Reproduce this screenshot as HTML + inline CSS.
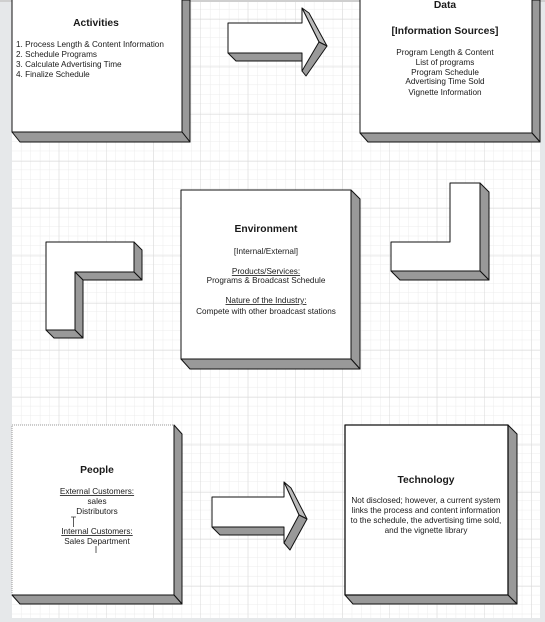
<!DOCTYPE html>
<html><head><style>
html,body{margin:0;padding:0;background:#fff;}
svg{display:block;}
text{font-family:"Liberation Sans",Arial,sans-serif;fill:#1a1a1a;}
.t{font-weight:bold;font-size:10.3px;}
.s{font-size:8.2px;}
</style></head><body>
<svg width="545" height="622" viewBox="0 0 545 622" xmlns="http://www.w3.org/2000/svg">
<defs>
<pattern id="minor" x="12" y="0" width="9.45" height="9.45" patternUnits="userSpaceOnUse">
<path d="M9.45 0V9.45H0" fill="none" stroke="#ececec" stroke-width="1"/>
</pattern>
<pattern id="major" x="12" y="20" width="47.25" height="47.25" patternUnits="userSpaceOnUse">
<path d="M47.25 0V47.25H0" fill="none" stroke="#d8d8d8" stroke-width="1"/>
</pattern>
</defs>
<rect width="545" height="622" fill="#fff"/>
<rect x="12" y="0" width="528" height="618" fill="url(#minor)"/>
<rect x="12" y="0" width="528" height="618" fill="url(#major)"/>
<rect x="0" y="0" width="12" height="622" fill="#e6e8ea"/>
<rect x="540" y="0" width="5" height="622" fill="#e6e8ea"/>
<rect x="0" y="618" width="545" height="4" fill="#e6e8ea"/>
<rect x="0" y="0" width="545" height="2" fill="#cfcfcf"/>

<g stroke="#111" stroke-width="1" stroke-linejoin="round">
<polygon points="182,0 190,0 190,142 182,132" fill="#999"/>
<polygon points="12,132 182,132 190,142 20,142" fill="#999"/>
<rect x="12" y="-2" width="170" height="134" fill="#fff"/>
<polygon points="532,0 540,0 540,142 532,133" fill="#999"/>
<polygon points="360,133 532,133 540,142 368,142" fill="#999"/>
<rect x="360" y="-2" width="172" height="135" fill="#fff"/>
<polygon points="351,190 360,199 360,369 351,359" fill="#999"/>
<polygon points="181,359 351,359 360,369 190,369" fill="#999"/>
<rect x="181" y="190" width="170" height="169" fill="#fff"/>
<polygon points="174,425 182,434 182,604 174,595" fill="#999"/>
<polygon points="12,595 174,595 182,604 20,604" fill="#999"/>
<rect x="12" y="425" width="162" height="170" fill="#fff" stroke="#999" stroke-dasharray="1,1"/>
<line x1="174" y1="425" x2="174" y2="595"/>
<line x1="12" y1="595" x2="174" y2="595"/>
<polygon points="508,425 517,434 517,604 508,595" fill="#999"/>
<polygon points="345,595 508,595 517,604 353,604" fill="#999"/>
<rect x="345" y="425" width="163" height="170" fill="#fff" stroke-width="1.3"/>

<polygon points="228,53 236,61 302,61 302,53" fill="#999"/>
<polygon points="302,8 309,13 327,46 319,42" fill="#bbb"/>
<polygon points="319,42 327,46 306,76 302,71 302,62" fill="#999"/>
<polygon points="228,23 302,23 302,8 319,42 302,71 302,53 228,53" fill="#fff"/>
<polygon points="212,527 220,535 284,535 284,527" fill="#999"/>
<polygon points="284,482 291,488 307,519 299,515" fill="#bbb"/>
<polygon points="299,515 307,519 290,550 284,543 284,535" fill="#999"/>
<polygon points="212,497 284,497 284,482 299,515 284,543 284,527 212,527" fill="#fff"/>

<polygon points="134,242 142,250 142,280 134,272" fill="#999"/>
<polygon points="75,272 134,272 142,280 83,280" fill="#999"/>
<polygon points="75,272 83,280 83,338 75,330" fill="#999"/>
<polygon points="46,330 75,330 83,338 54,338" fill="#999"/>
<polygon points="46,242 134,242 134,272 75,272 75,330 46,330" fill="#fff"/>
<polygon points="480,183 489,192 489,280 480,271" fill="#999"/>
<polygon points="391,271 480,271 489,280 400,280" fill="#999"/>
<polygon points="450,183 480,183 480,271 391,271 391,242 450,242" fill="#fff"/>
</g>

<text class="t" x="96" y="26" text-anchor="middle">Activities</text>
<text class="s" x="16" y="47">1.  Process Length &amp; Content Information</text>
<text class="s" x="16" y="57">2.  Schedule Programs</text>
<text class="s" x="16" y="67">3. Calculate Advertising Time</text>
<text class="s" x="16" y="77">4. Finalize Schedule</text>

<text class="t" x="445" y="8" text-anchor="middle">Data</text>
<text class="t" x="445" y="34" text-anchor="middle">[Information Sources]</text>
<text class="s" x="445" y="55" text-anchor="middle">Program Length &amp; Content</text>
<text class="s" x="445" y="65" text-anchor="middle">List of programs</text>
<text class="s" x="445" y="75" text-anchor="middle">Program Schedule</text>
<text class="s" x="445" y="84" text-anchor="middle">Advertising Time Sold</text>
<text class="s" x="445" y="95" text-anchor="middle">Vignette Information</text>

<text class="t" x="266" y="232" text-anchor="middle">Environment</text>
<text class="s" x="266" y="254" text-anchor="middle">[Internal/External]</text>
<text class="s" x="266" y="274" text-anchor="middle" text-decoration="underline">Products/Services:</text>
<text class="s" x="266" y="283" text-anchor="middle">Programs &amp; Broadcast Schedule</text>
<text class="s" x="266" y="303" text-anchor="middle" text-decoration="underline">Nature of the Industry:</text>
<text class="s" x="266" y="314" text-anchor="middle">Compete with other broadcast stations</text>

<text class="t" x="97" y="473" text-anchor="middle">People</text>
<text class="s" x="97" y="494" text-anchor="middle" text-decoration="underline">External Customers:</text>
<text class="s" x="97" y="504" text-anchor="middle">sales</text>
<text class="s" x="97" y="514" text-anchor="middle">Distributors</text>
<path d="M71 517h5M73.5 517v10M96 553v-7" stroke="#333" stroke-width="0.8"/>
<text class="s" x="97" y="534" text-anchor="middle" text-decoration="underline">Internal Customers:</text>
<text class="s" x="97" y="544" text-anchor="middle">Sales Department</text>

<text class="t" x="426" y="483" text-anchor="middle">Technology</text>
<text class="s" x="426" y="503" text-anchor="middle">Not disclosed; however,  a current system</text>
<text class="s" x="426" y="513" text-anchor="middle">links the process and content information</text>
<text class="s" x="426" y="523" text-anchor="middle">to the schedule, the advertising time sold,</text>
<text class="s" x="426" y="533" text-anchor="middle">and the vignette library</text>
</svg>
</body></html>
